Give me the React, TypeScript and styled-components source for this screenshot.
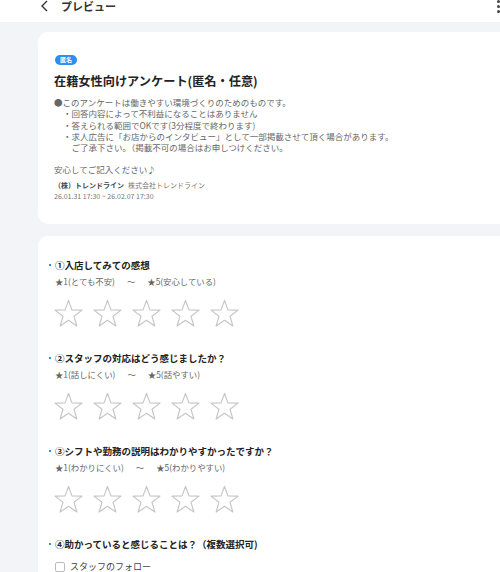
import React from "react";
import styled, { createGlobalStyle } from "styled-components";

const Global = createGlobalStyle`
  html, body { margin: 0; padding: 0; background: #f3f4f7; overflow: hidden; }
  body { font-family: "Noto Sans CJK JP", "Noto Sans", sans-serif; color: #222; }
`;

const Page = styled.div`
  width: 546px;
  height: 572px;
  overflow: hidden;
  background: #f3f4f7;
`;

const Header = styled.header`
  height: 22px;
  background: #fff;
  display: flex;
  align-items: flex-start;
  justify-content: space-between;
  padding: 0 46px 0 40px;
`;

const HeaderLeft = styled.div`
  display: flex;
  align-items: center;
  gap: 11px;
  margin-top: -1px;
`;

const HeaderTitle = styled.span`
  font-size: 11px;
  font-weight: 700;
  line-height: 14px;
  color: #333;
`;

const Dots = styled.div`
  display: flex;
  flex-direction: column;
  gap: 2px;
  span {
    width: 3px;
    height: 3px;
    border-radius: 50%;
    background: #444;
  }
`;

const Content = styled.main`
  padding: 10px 0 0 38px;
  display: flex;
  flex-direction: column;
  gap: 12px;
`;

const Card = styled.section<{ $pad: string }>`
  background: #fff;
  border-radius: 10px;
  padding: ${(p) => p.$pad};
`;

const Badge = styled.div`
  width: fit-content;
  background: #2f8cf2;
  color: #fff;
  font-size: 6px;
  font-weight: 700;
  line-height: 10px;
  height: 10px;
  padding: 0 5px;
  border-radius: 6px;
  margin-left: 1px;
`;

const Title = styled.h1`
  margin: 8px 0 7px;
  font-size: 12.2px;
  font-weight: 700;
  line-height: 17px;
  color: #222;
`;

const Desc = styled.div`
  font-size: 8.5px;
  line-height: 11.3px;
  color: #666;
`;

const DescLine = styled.div<{ $indent?: boolean }>`
  padding-left: ${(p) => (p.$indent ? "9px" : "0")};
  white-space: nowrap;
`;

const Note = styled.div`
  margin-top: 10px;
  font-size: 8.5px;
  line-height: 12px;
  color: #666;
`;

const Company = styled.div`
  margin-top: 5px;
  font-size: 7px;
  line-height: 11px;
  color: #777;
  b { color: #444; font-weight: 700; margin-right: 4px; }
`;

const DateText = styled.div`
  font-size: 7px;
  line-height: 11px;
  color: #777;
`;

const Question = styled.div`
  margin-bottom: 22px;
`;

const QTitle = styled.div`
  position: relative;
  font-size: 9.5px;
  font-weight: 700;
  line-height: 14px;
  color: #222;
  &::before {
    content: "";
    position: absolute;
    left: -6px;
    top: 6px;
    width: 2px;
    height: 2px;
    background: #2f8cf2;
  }
`;

const Scale = styled.div`
  margin-top: 3px;
  font-size: 8.4px;
  line-height: 13px;
  color: #666;
  display: flex;
  gap: 12px;
`;

const Stars = styled.div`
  margin-top: 10px;
  display: flex;
  gap: 8px;
  margin-left: -2px;
`;

const CheckRow = styled.label`
  display: flex;
  align-items: center;
  gap: 5px;
  margin-top: 10px;
  font-size: 9px;
  line-height: 12px;
  color: #444;
`;

const Box = styled.span`
  width: 8px;
  height: 8px;
  border: 1px solid #bbb;
  border-radius: 2px;
  background: #fff;
`;

const Star = () => (
  <svg width="31" height="31" viewBox="0 0 24 24">
    <path
      d="M12 1.8 L14.65 9.16 L22.46 9.4 L16.28 14.19 L18.47 21.7 L12 17.3 L5.53 21.7 L7.72 14.19 L1.54 9.4 L9.35 9.16 Z"
      fill="none"
      stroke="#c6c6c6"
      strokeWidth="0.9"
      strokeLinejoin="round"
    />
  </svg>
);

const questions = [
  { t: "①入店してみての感想", a: "★1(とても不安)", b: "★5(安心している)" },
  { t: "②スタッフの対応はどう感じましたか？", a: "★1(話しにくい)", b: "★5(話やすい)" },
  { t: "③シフトや勤務の説明はわかりやすかったですか？", a: "★1(わかりにくい)", b: "★5(わかりやすい)" },
];

export default function App() {
  return (
    <Page>
      <Global />
      <Header>
        <HeaderLeft>
          <svg width="10" height="12" viewBox="0 0 10 12">
            <path d="M7 1 L2 6 L7 11" fill="none" stroke="#333" strokeWidth="1.4" />
          </svg>
          <HeaderTitle>プレビュー</HeaderTitle>
        </HeaderLeft>
        <Dots>
          <span />
          <span />
          <span />
        </Dots>
      </Header>
      <Content>
        <Card $pad="23px 16px 22px 16px">
          <Badge>匿名</Badge>
          <Title>在籍女性向けアンケート(匿名・任意)</Title>
          <Desc>
            <DescLine>●このアンケートは働きやすい環境づくりのためのものです。</DescLine>
            <DescLine $indent>・回答内容によって不利益になることはありません</DescLine>
            <DescLine $indent>・答えられる範囲でOKです(3分程度で終わります)</DescLine>
            <DescLine $indent>・求人広告に「お店からのインタビュー」として一部掲載させて頂く場合があります。</DescLine>
            <DescLine $indent>　ご了承下さい。（掲載不可の場合はお申しつけください。</DescLine>
          </Desc>
          <Note>安心してご記入ください♪</Note>
          <Company>
            <b>（株）トレンドライン</b>株式会社トレンドライン
          </Company>
          <DateText>26.01.31 17:30 ~ 26.02.07 17:30</DateText>
        </Card>
        <Card $pad="22px 16px 20px 17px">
          {questions.map((q) => (
            <Question key={q.t}>
              <QTitle>{q.t}</QTitle>
              <Scale>
                <span>{q.a}</span>
                <span>〜</span>
                <span>{q.b}</span>
              </Scale>
              <Stars>
                {[0, 1, 2, 3, 4].map((i) => (
                  <Star key={i} />
                ))}
              </Stars>
            </Question>
          ))}
          <QTitle>④助かっていると感じることは？（複数選択可)</QTitle>
          <CheckRow>
            <Box />
            スタッフのフォロー
          </CheckRow>
        </Card>
      </Content>
    </Page>
  );
}
